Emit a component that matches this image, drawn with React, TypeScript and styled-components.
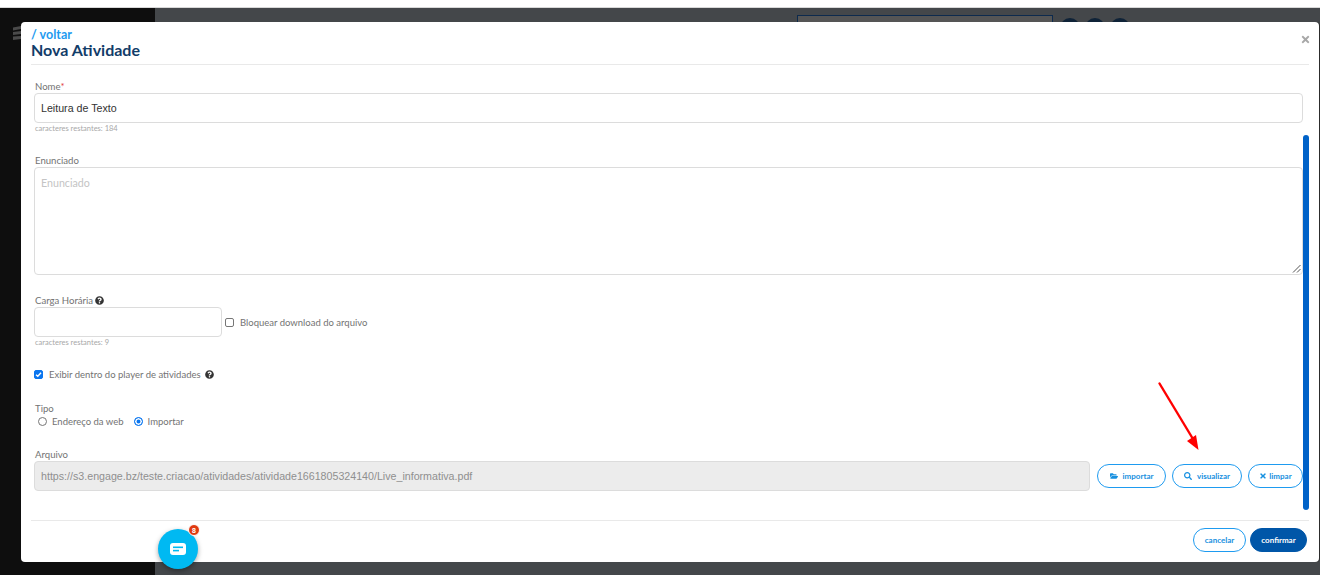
import React from "react";
import styled, { createGlobalStyle } from "styled-components";
import { FaFolderOpen, FaQuestionCircle, FaSearch, FaTimes } from "react-icons/fa";

const GlobalStyle = createGlobalStyle`
  html, body {
    margin: 0;
    padding: 0;
    height: 575px;
    overflow: hidden;
    background: #fff;
  }
  * {
    box-sizing: border-box;
  }
`;

const uiFont = `Lato, "Noto Sans", sans-serif`;
const fieldFont = `"Liberation Sans", Arial, sans-serif`;

const Page = styled.div`
  position: relative;
  width: 1320px;
  height: 575px;
  display: flex;
  flex-direction: column;
  font-family: ${uiFont};
`;

const TopStrip = styled.div`
  height: 8px;
  background: #fff;
  border-bottom: 1px solid #d8d8d8;
`;

const Shell = styled.div`
  flex: 1;
  display: flex;
`;

const Sidebar = styled.aside`
  width: 155px;
  background: #0e0e0e;
  padding: 16px 0 0 12px;
  color: #4a4a4a;
`;

const Main = styled.main`
  flex: 1;
  background: #44474a;
  display: flex;
  justify-content: flex-start;
  align-items: flex-start;
  padding: 7px 0 0 642px;
  gap: 5px;
`;

const SearchBox = styled.div`
  width: 256px;
  height: 30px;
  margin-right: 2px;
  background: #555;
  border: 1px solid #0d2a4d;
`;

const Avatar = styled.div`
  width: 20px;
  height: 20px;
  margin-top: 3px;
  border-radius: 50%;
  background: #0f2338;
`;

const Modal = styled.section`
  position: absolute;
  left: 21px;
  top: 22px;
  width: 1298px;
  height: 540px;
  background: #fff;
  border-radius: 4px;
  box-shadow: 1px 0 0 #2c2c2c;
  display: flex;
  flex-direction: column;
  padding: 0 10px;
`;

const Header = styled.header`
  position: relative;
  height: 43px;
  padding-top: 6px;
  border-bottom: 1px solid #e9e9e9;
`;

const BackLink = styled.a`
  display: block;
  font-size: 12.5px;
  line-height: 13px;
  font-weight: 700;
  color: #1e9bf0;
`;

const Title = styled.h1`
  margin: 0;
  font-size: 16px;
  line-height: 18px;
  font-weight: 700;
  color: #123c69;
`;

const CloseButton = styled.span`
  position: absolute;
  right: -2px;
  top: 12px;
  display: flex;
  color: #a8a8a8;
  font-size: 11px;
`;

const Form = styled.div`
  flex: 1;
  display: flex;
  flex-direction: column;
  padding: 15px 6px 0 3px;
`;

const Label = styled.label`
  display: flex;
  align-items: center;
  gap: 2px;
  padding-left: 1px;
  font-size: 9.6px;
  line-height: 13px;
  color: #737373;

  svg {
    color: #333;
    font-size: 9px;
  }
`;

const Required = styled.span`
  color: #e04040;
  margin-left: -2px;
`;

const TextInput = styled.div<{ $width?: number; $height?: number }>`
  width: ${(p) => (p.$width ? `${p.$width}px` : "100%")};
  height: ${(p) => p.$height ?? 30}px;
  border: 1px solid #dcdcdc;
  border-radius: 4px;
  padding: 0 6px;
  display: flex;
  align-items: center;
  font-family: ${fieldFont};
  font-size: 10.67px;
  color: #333;
  flex-shrink: 0;
`;

const TextArea = styled(TextInput)`
  position: relative;
  align-items: flex-start;
  padding-top: 8px;
  color: #c4c4c4;
  font-family: ${uiFont};
`;

const ResizeHandle = styled.svg`
  position: absolute;
  right: 1px;
  bottom: 1px;
`;

const Hint = styled.div`
  padding-left: 1px;
  font-size: 7.5px;
  line-height: 11px;
  color: #a8a8a8;
`;

const Field = styled.div<{ $gap: number }>`
  margin-bottom: ${(p) => p.$gap}px;
`;

const InlineRow = styled.div`
  display: flex;
  align-items: center;
  gap: 3px;
`;

const OptionText = styled.span`
  font-size: 9.5px;
  line-height: 13px;
  color: #737373;
`;

const CheckOption = styled.label`
  display: flex;
  align-items: center;
  gap: 6px;

  svg {
    color: #333;
    font-size: 9px;
  }

  ${OptionText} + svg {
    margin-left: -2px;
  }
`;

const Box = styled.span<{ $checked?: boolean }>`
  width: 9px;
  height: 9px;
  border-radius: 2px;
  border: 1px solid ${(p) => (p.$checked ? "#0b76ef" : "#767676")};
  background: ${(p) => (p.$checked ? "#0b76ef" : "#fff")};
  display: flex;
  align-items: center;
  justify-content: center;
`;

const RadioRow = styled.div`
  display: flex;
  align-items: center;
  padding-left: 4px;
  gap: 10px;
`;

const RadioOption = styled.label`
  display: flex;
  align-items: center;
  gap: 5px;
`;

const Radio = styled.span<{ $checked?: boolean }>`
  width: 9px;
  height: 9px;
  border-radius: 50%;
  border: 1px solid ${(p) => (p.$checked ? "#0b76ef" : "#767676")};
  background: ${(p) => (p.$checked ? "#0b76ef" : "#fff")};
  box-shadow: ${(p) => (p.$checked ? "inset 0 0 0 1.5px #fff" : "none")};
`;

const FileRow = styled.div`
  display: flex;
  align-items: center;
  gap: 6px;
`;

const FileInput = styled(TextInput)`
  flex: 1;
  margin-right: 1px;
  background: #ececec;
  color: #8f8f8f;
`;

const PillButton = styled.button<{ $width: number; $solid?: boolean; $gap?: number }>`
  width: ${(p) => p.$width}px;
  height: 24px;
  padding: 0;
  border-radius: 12px;
  border: 1px solid ${(p) => (p.$solid ? "#0056a8" : "#1e9bf0")};
  background: ${(p) => (p.$solid ? "#0056a8" : "#fff")};
  color: ${(p) => (p.$solid ? "#fff" : "#1790e0")};
  font-family: ${uiFont};
  font-size: 8px;
  font-weight: 700;
  display: flex;
  align-items: center;
  justify-content: center;
  gap: ${(p) => p.$gap ?? 5}px;

  svg {
    font-size: 8px;
  }
`;

const Footer = styled.footer`
  height: 42px;
  border-top: 1px solid #e9e9e9;
  display: flex;
  justify-content: flex-end;
  align-items: flex-start;
  gap: 4px;
  padding: 7px 2px 0 0;
`;

const Scrollbar = styled.div`
  position: absolute;
  left: 1303px;
  top: 135px;
  width: 6px;
  height: 375px;
  border-radius: 3px;
  background: #0062c8;
`;

const ChatButton = styled.div`
  position: absolute;
  left: 158px;
  top: 529px;
  width: 40px;
  height: 40px;
  border-radius: 50%;
  background: #00b9f2;
  box-shadow: 0 2px 5px rgba(0, 0, 0, 0.35);
  display: flex;
  align-items: center;
  justify-content: center;
`;

const ChatBadge = styled.span`
  position: absolute;
  right: -2px;
  top: -5px;
  width: 12px;
  height: 12px;
  border-radius: 50%;
  background: #e03a10;
  border: 1px solid #fff;
  color: #fff;
  font-family: ${fieldFont};
  font-size: 7px;
  font-weight: 700;
  display: flex;
  align-items: center;
  justify-content: center;
`;

const Annotation = styled.svg`
  position: absolute;
  left: 1150px;
  top: 375px;
`;

const Check = () => (
  <svg width="7" height="7" viewBox="0 0 10 10">
    <path d="M1.5 5.2 4 7.6 8.6 2.4" fill="none" stroke="#fff" strokeWidth="2" />
  </svg>
);

export default function App() {
  return (
    <>
      <GlobalStyle />
      <Page>
        <TopStrip />
        <Shell>
          <Sidebar>
            <svg width="10" height="14" viewBox="0 0 10 14">
              <path d="M1 1.5 9 0v3L1 4.5zM1 6l8-1v3L1 9zM1 10.5 9 10v3l-8 1z" fill="currentColor" />
            </svg>
          </Sidebar>
          <Main>
            <SearchBox />
            <Avatar />
            <Avatar />
            <Avatar />
          </Main>
        </Shell>

        <Modal>
          <Header>
            <BackLink>/ voltar</BackLink>
            <Title>Nova Atividade</Title>
            <CloseButton>
              <FaTimes />
            </CloseButton>
          </Header>

          <Form>
            <Field $gap={20}>
              <Label>
                Nome<Required>*</Required>
              </Label>
              <TextInput>Leitura de Texto</TextInput>
              <Hint>caracteres restantes: 184</Hint>
            </Field>

            <Field $gap={19}>
              <Label>Enunciado</Label>
              <TextArea $height={108}>
                Enunciado
                <ResizeHandle width="9" height="9" viewBox="0 0 9 9">
                  <path d="M8.5 1 1 8.5M8.5 5 5 8.5" stroke="#555" strokeWidth="1" />
                </ResizeHandle>
              </TextArea>
            </Field>

            <Field $gap={20}>
              <Label>
                Carga Horária <FaQuestionCircle />
              </Label>
              <InlineRow>
                <TextInput $width={188} />
                <CheckOption>
                  <Box />
                  <OptionText>Bloquear download do arquivo</OptionText>
                </CheckOption>
              </InlineRow>
              <Hint>caracteres restantes: 9</Hint>
            </Field>

            <Field $gap={21}>
              <CheckOption>
                <Box $checked>
                  <Check />
                </Box>
                <OptionText>Exibir dentro do player de atividades</OptionText>
                <FaQuestionCircle />
              </CheckOption>
            </Field>

            <Field $gap={20}>
              <Label>Tipo</Label>
              <RadioRow>
                <RadioOption>
                  <Radio />
                  <OptionText>Endereço da web</OptionText>
                </RadioOption>
                <RadioOption>
                  <Radio $checked />
                  <OptionText>Importar</OptionText>
                </RadioOption>
              </RadioRow>
            </Field>

            <Field $gap={0}>
              <Label>Arquivo</Label>
              <FileRow>
                <FileInput>https://s3.engage.bz/teste.criacao/atividades/atividade1661805324140/Live_informativa.pdf</FileInput>
                <PillButton $width={69}>
                  <FaFolderOpen /> importar
                </PillButton>
                <PillButton $width={70}>
                  <FaSearch /> visualizar
                </PillButton>
                <PillButton $width={55} $gap={2}>
                  <FaTimes /> limpar
                </PillButton>
              </FileRow>
            </Field>
          </Form>

          <Footer>
            <PillButton $width={53}>cancelar</PillButton>
            <PillButton $width={57} $solid>
              confirmar
            </PillButton>
          </Footer>
        </Modal>

        <Scrollbar />

        <ChatButton>
          <svg width="16" height="12" viewBox="0 0 16 12">
            <rect width="16" height="12" rx="3" fill="#fff" />
            <rect x="3" y="3.5" width="10" height="1.6" fill="#00b9f2" />
            <rect x="3" y="6.8" width="6" height="1.6" fill="#00b9f2" />
          </svg>
          <ChatBadge>8</ChatBadge>
        </ChatButton>

        <Annotation width="60" height="85" viewBox="0 0 60 85">
          <path d="M9.5 8.5 43 64" stroke="#f00" strokeWidth="2.4" strokeLinecap="round" />
          <path d="M48.5 75 37 66 46 60z" fill="#f00" />
        </Annotation>
      </Page>
    </>
  );
}
